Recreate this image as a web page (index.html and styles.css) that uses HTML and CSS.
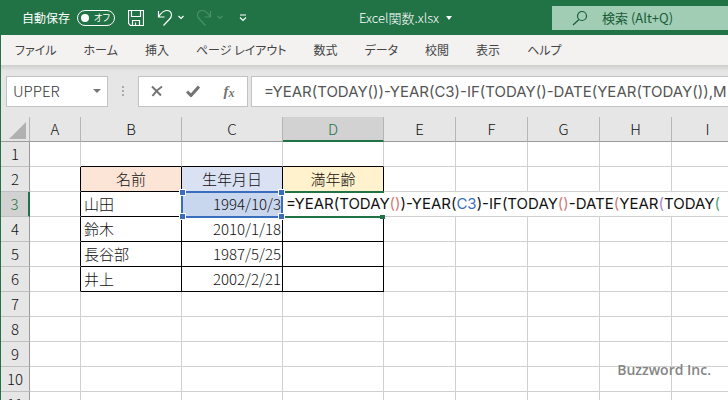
FILE: index.html
```
<!DOCTYPE html>
<html lang="ja">
<head>
<meta charset="utf-8">
<title>Excel関数.xlsx</title>
<link rel="stylesheet" href="styles.css">
</head>
<body>
<header class="titlebar">
  <div class="quick">
    <label class="autosave"><span>自動保存</span>
      <span class="switch"><input type="checkbox" role="switch"><span class="state">オフ</span></span>
    </label>
    <button class="tool save" aria-label="上書き保存"><svg width="16" height="16" viewBox="0 0 16 16"><path d="M.5.5h15v15H2.500l-2-2zM3.500.5v6h9v-6M4.500 15.500v-5h7v5M7.500 15v-2.500"/></svg></button>
    <button class="tool undo" aria-label="元に戻す"><svg width="28" height="18" viewBox="0 0 28 18"><path d="M1.500 2v6h6M1.500 8C4 4 6.500 1.500 9.500 1.500c3 0 5 2 5 4.700 0 2-1 3-2.300 4.300L6.500 16.500"/><path d="m21.500 7 2.500 2.500 2.500-2.500"/></svg></button>
    <button class="tool redo" aria-label="やり直し" disabled><svg width="28" height="18" viewBox="0 0 28 18"><path d="M14.500 2v6h-6M14.500 8C12 4 9.500 1.500 6.500 1.500c-3 0-5 2-5 4.700 0 2 1 3 2.300 4.300l5.700 6"/><path d="m21.500 7 2.500 2.500 2.500-2.500"/></svg></button>
    <button class="tool custom" aria-label="クイック アクセス ツール バーのカスタマイズ"><svg width="8" height="8" viewBox="0 0 8 8"><path d="M1 1h6M1 3.500l3 3 3-3"/></svg></button>
  </div>
  <button class="filename">Excel関数.xlsx<svg width="6" height="4" viewBox="0 0 6 4"><path d="M0 0h6L3 4z"/></svg></button>
  <label class="search">
    <svg width="16" height="16" viewBox="0 0 16 16"><circle cx="10" cy="6" r="4.500"/><path d="M7 9.500 1 15"/></svg>
    <input type="text" placeholder="検索 (Alt+Q)" aria-label="検索">
  </label>
</header>
<nav class="tabs">
  <a href="#">ファイル</a><a href="#">ホーム</a><a href="#">挿入</a><a href="#">ページ レイアウト</a><a href="#">数式</a><a href="#">データ</a><a href="#">校閲</a><a href="#">表示</a><a href="#">ヘルプ</a>
</nav>
<section class="formula-row">
  <div class="namebox">
    <input type="text" value="UPPER" aria-label="名前ボックス">
    <button aria-label="名前の一覧"><svg width="8" height="4" viewBox="0 0 8 4"><path d="M0 0h8L4 4z"/></svg></button>
  </div>
  <svg class="grip" width="2" height="10" viewBox="0 0 2 10"><path d="M0 0h2v2H0zM0 4h2v2H0zM0 8h2v2H0z"/></svg>
  <div class="actions">
    <button aria-label="キャンセル"><svg width="12" height="12" viewBox="0 0 12 12"><path class="line" d="m1 1.500 9 9M11 1.500C7 4 4 7 1.500 11"/></svg></button>
    <button aria-label="入力"><svg width="14" height="12" viewBox="0 0 14 12"><path class="check" d="M1 6.500l4 4 8-9"/></svg></button>
    <button class="fx" aria-label="関数の挿入"><i>f</i><i class="sub">x</i></button>
  </div>
  <input class="formula" type="text" aria-label="数式バー" value="=YEAR(TODAY())-YEAR(C3)-IF(TODAY()-DATE(YEAR(TODAY()),M">
</section>
<main class="sheet">
  <table>
    <colgroup><col class="w-head"><col class="w-a"><col class="w-data" span="3"><col class="w-std" span="5"></colgroup>
    <thead>
      <tr><th class="corner"><svg width="17" height="17" viewBox="0 0 17 17"><path d="M17 0v17H0z"/></svg></th><th>A</th><th>B</th><th>C</th><th class="active">D</th><th>E</th><th>F</th><th>G</th><th>H</th><th>I</th></tr>
    </thead>
    <tbody>
      <tr><th>1</th><td></td><td class="kb"></td><td class="kb"></td><td class="kb"></td><td></td><td></td><td></td><td></td><td></td></tr>
      <tr><th>2</th><td class="kr"></td><td class="k title peach">名前</td><td class="k title blue">生年月日</td><td class="k title yellow">満年齢</td><td></td><td></td><td></td><td></td><td></td></tr>
      <tr><th class="active">3</th><td class="kr"></td><td class="k">山田</td><td class="k date ref">1994/10/3<span class="range"><b></b><b></b><b></b><b></b></span></td><td class="k editing"><div class="editor">=YEAR(TODAY<span class="red">()</span>)-YEAR(<span class="cellref">C3</span>)-IF(TODAY<span class="red">()</span>-DATE<span class="red">(</span>YEAR<span class="purple">(</span>TODAY<span class="green">(</span></div><span class="cursor-box"></span></td><td></td><td></td><td></td><td></td><td></td></tr>
      <tr><th>4</th><td class="kr"></td><td class="k">鈴木</td><td class="k date">2010/1/18</td><td class="k"></td><td></td><td></td><td></td><td></td><td></td></tr>
      <tr><th>5</th><td class="kr"></td><td class="k">長谷部</td><td class="k date">1987/5/25</td><td class="k"></td><td></td><td></td><td></td><td></td><td></td></tr>
      <tr><th>6</th><td class="kr"></td><td class="k">井上</td><td class="k date">2002/2/21</td><td class="k"></td><td></td><td></td><td></td><td></td><td></td></tr>
      <tr><th>7</th><td></td><td></td><td></td><td></td><td></td><td></td><td></td><td></td><td></td></tr>
      <tr><th>8</th><td></td><td></td><td></td><td></td><td></td><td></td><td></td><td></td><td></td></tr>
      <tr><th>9</th><td></td><td></td><td></td><td></td><td></td><td></td><td></td><td></td><td></td></tr>
      <tr><th>10</th><td></td><td></td><td></td><td></td><td></td><td></td><td></td><td></td><td></td></tr>
      <tr><th>11</th><td></td><td></td><td></td><td></td><td></td><td></td><td></td><td></td><td></td></tr>
    </tbody>
  </table>
  <div class="credit">Buzzword Inc.</div>
</main>
</body>
</html>
```
FILE: styles.css
```
* { box-sizing: border-box; }
body {
  margin: 0;
  height: 100vh;
  display: flex;
  flex-direction: column;
  overflow: hidden;
  border-left: 1px solid #217346;
  background: #e6e6e6;
  color: #222;
  font: 300 15px/24px "Noto Sans CJK JP", sans-serif;
}
button, input { font: inherit; color: inherit; border: 0; padding: 0; background: none; }
button { display: flex; align-items: center; justify-content: center; }
svg { display: block; flex: none; }

.titlebar {
  flex: none;
  height: 35px;
  display: flex;
  align-items: center;
  background: #217346;
  color: #fff;
  font-size: 12px;
  font-weight: 400;
}
.quick { flex: 1; display: flex; align-items: center; padding-left: 21px; }
.autosave { display: flex; align-items: center; gap: 7px; white-space: nowrap; }
.switch {
  display: flex;
  align-items: center;
  gap: 5px;
  width: 38px;
  height: 16px;
  padding-left: 3px;
  border: 1px solid #fff;
  border-radius: 8px;
}
.switch input { appearance: none; width: 8px; height: 8px; margin: 0; border-radius: 50%; background: #fff; }
.state { font-size: 9px; line-height: 14px; font-feature-settings: "palt"; }
.tool svg { fill: none; stroke: #fff; stroke-width: 1.2; }
.save { margin-left: 13px; }
.undo { margin-left: 13px; }
.redo { margin-left: 11px; }
.redo svg { stroke: #4b9069; }
.custom { margin-left: 15px; }
.filename { gap: 7px; margin-right: 100px; white-space: nowrap; font-size: 13px; font-weight: 300; }
.filename svg { fill: #fff; }
.search {
  display: flex;
  align-items: center;
  gap: 14px;
  width: 176px;
  height: 24px;
  padding-left: 20px;
  background: #a0cdb3;
  color: #185c37;
  font-size: 13px;
}
.search svg { fill: none; stroke: #185c37; stroke-width: 1.2; }
.search input { flex: 1; min-width: 0; }
.search input::placeholder { color: #185c37; opacity: 1; }

.tabs {
  flex: none;
  height: 30px;
  display: flex;
  align-items: center;
  gap: 27px;
  padding-left: 14px;
  background: #f3f2f1;
  font-size: 12px;
  font-weight: 400;
  white-space: nowrap;
  font-feature-settings: "palt";
}
.tabs a { color: #444; text-decoration: none; }

.formula-row {
  flex: none;
  display: flex;
  align-items: center;
  height: 52px;
  padding: 0 0 0 5px;
  background: linear-gradient(#cfcecd, #e6e6e6 6px);
}
.namebox, .actions, .formula { height: 31px; border: 1px solid #c3c3c3; background: #fff; color: #333; }
.namebox { display: flex; width: 102px; }
.namebox input { flex: 1; min-width: 0; padding-left: 6px; }
.namebox button { width: 20px; }
.namebox svg { fill: #777; }
.grip { margin: 0 14px; fill: #aaa; }
.actions { display: grid; grid-template-columns: repeat(3, 1fr); width: 110px; }
.actions path { fill: none; stroke: #737373; stroke-width: 2; }
.actions .check { stroke-width: 3; }
.fx { font: italic bold 15px/20px "Liberation Serif", serif; color: #737373; }
.fx .sub { font-size: 12px; padding-top: 4px; }
.formula, .editor { font-family: Inter, sans-serif; font-weight: 400; }
.formula { flex: 1; min-width: 0; margin-left: 3px; padding-left: 12px; border-right: 0; color: #555; }

.sheet { flex: 1; min-height: 0; position: relative; overflow: hidden; }
table { width: 743px; table-layout: fixed; border-collapse: separate; border-spacing: 0; background: #fff; color: #111; }
.w-head { width: 29px; }
.w-a { width: 51px; }
.w-data { width: 101px; }
.w-std { width: 72px; }
th, td { height: 25px; padding: 0; border: 0 solid #d0d0d0; border-width: 0 1px 1px 0; line-height: 22px; white-space: nowrap; }
th { background: #e6e6e6; font-weight: 300; border-color: #9b9b9b; }
thead th { border-right-color: #b5b5b5; }
tbody th { border-bottom-color: #c0c0c0; border-right-color: #999; }
.corner svg { margin: 3px 0 0 8px; fill: #b1b1b1; }
thead .active { background: #d2d2d2; color: #217346; border-bottom: 2px solid #217346; }
tbody .active { background: #d2d2d2; color: #217346; border-right: 2px solid #217346; }
.k { border-color: #000; padding-left: 3px; }
.kb { border-bottom-color: #000; }
.kr { border-right-color: #000; }
.title { padding: 0; text-align: center; }
.peach { background: #fce4d6; }
.blue { background: #d9e1f2; }
.yellow { background: #fff2cc; }
.date { text-align: right; padding-right: 1px; }
.ref { position: relative; background: #c9d7ee; }
.range { position: absolute; inset: -1px -1px -2px -1px; border: 2px solid #3a6ebd; z-index: 3; }
.range b { position: absolute; width: 5px; height: 5px; background: #3a6ebd; outline: 1px solid #fff; }
.range b:nth-child(1) { left: -3px; top: -3px; }
.range b:nth-child(2) { right: -3px; top: -3px; }
.range b:nth-child(3) { left: -3px; bottom: -3px; }
.range b:nth-child(4) { right: -3px; bottom: -3px; }
.editing { position: relative; }
.editor { position: absolute; left: 0; top: 0; z-index: 2; width: 100vw; height: 24px; line-height: 24px; padding-left: 3px; background: #fff; overflow: hidden; }
.cursor-box { position: absolute; inset: -1px -1px -2px 0; z-index: 2; border: solid #217346; border-width: 2px 0; }
.cursor-box::after { content: ""; position: absolute; right: -1px; bottom: -3px; width: 5px; height: 4px; background: #217346; }
.red { color: #d0797a; }
.purple { color: #a884cc; }
.green { color: #4fa374; }
.cellref { color: #3a6ebd; }
.credit { position: absolute; right: 17px; bottom: 19px; color: #858585; font: 600 14px/22px "Open Sans", sans-serif; }
```
